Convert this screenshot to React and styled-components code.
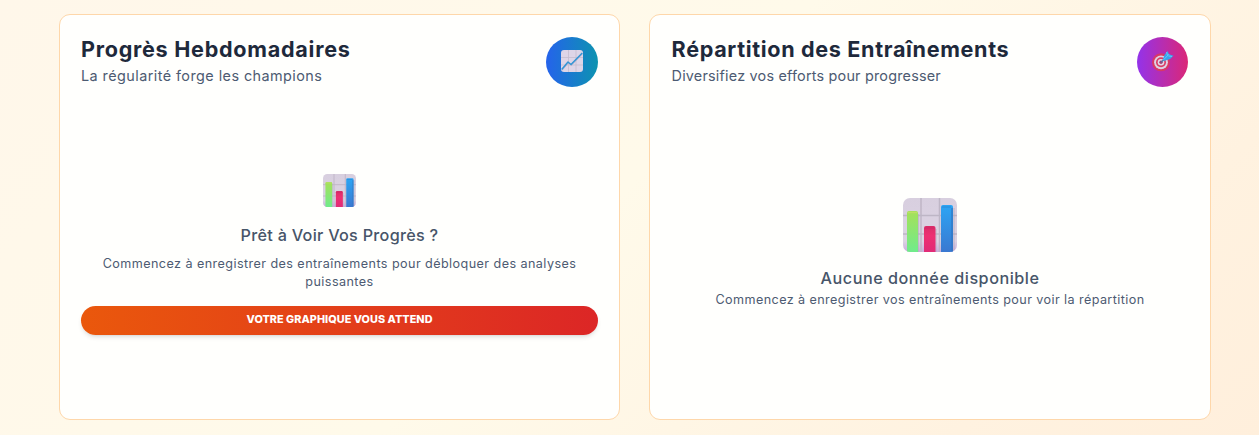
import React from "react";
import styled, { createGlobalStyle } from "styled-components";

const GlobalStyle = createGlobalStyle`
  * { box-sizing: border-box; }
  body { margin: 0; background: #fffaea; }
`;

const Page = styled.main`
  height: 435px;
  padding: 14px 48px 15px 59px;
  display: grid;
  grid-template-columns: 561px 562px;
  column-gap: 29px;
  overflow: hidden;
  background: linear-gradient(135deg, #fff7ea 0%, #fffaea 48%, #fff2e0 82%, #ffefdc 100%);
  font-family: Inter, "Liberation Sans", sans-serif;
  color: #4d5b72;
`;

const Card = styled.section`
  display: flex;
  flex-direction: column;
  height: 406px;
  padding: 22px ${(p) => p.$side || 21}px 21px;
  border: 1px solid #fed7aa;
  border-radius: 11px;
  background: #fffffd;
`;

const CardHeader = styled.header`
  display: flex;
  justify-content: space-between;
  height: 50px;
`;

const Title = styled.h2`
  margin: 0;
  color: #1e293b;
  font-size: 21.6px;
  font-weight: 670;
  line-height: 25px;
  letter-spacing: ${(p) => p.$tracking || 0}px;
  white-space: nowrap;
`;

const Subtitle = styled.p`
  margin: 3px 0 0;
  font-size: 14.4px;
  font-weight: 400;
  line-height: 22px;
  letter-spacing: ${(p) => p.$tracking || 0}px;
  white-space: nowrap;
`;

const IconBadge = styled.div`
  display: flex;
  align-items: center;
  justify-content: center;
  width: ${(p) => p.$width}px;
  height: 50px;
  border-radius: 50%;
  background: linear-gradient(90deg, ${(p) => p.$from}, ${(p) => p.$to});
  svg { display: block; margin-bottom: 2px; }
`;

const EmptyState = styled.div`
  display: flex;
  flex-direction: column;
  align-items: center;
  padding-top: ${(p) => p.$top}px;
  text-align: center;
  svg { display: block; }
`;

const EmptyTitle = styled.h3`
  margin: ${(p) => p.$gap}px 0 0;
  color: #475569;
  font-size: 16.2px;
  font-weight: ${(p) => p.$weight || 500};
  line-height: 24px;
  letter-spacing: ${(p) => p.$tracking || 0}px;
`;

const EmptyText = styled.p`
  margin: ${(p) => p.$gap}px 0 0;
  font-size: 12.6px;
  font-weight: 400;
  line-height: 18px;
  letter-spacing: ${(p) => p.$tracking || 0}px;
`;

const Banner = styled.div`
  width: 100%;
  height: 29px;
  margin-top: 15px;
  border-radius: 15px;
  background: linear-gradient(90deg, #ea580c, #dc2626);
  box-shadow: 0 3px 5px -1px rgba(0, 0, 0, 0.12), 0 2px 3px -2px rgba(0, 0, 0, 0.1);
  color: #fff;
  font-size: 10.8px;
  font-weight: 800;
  line-height: 27px;
  letter-spacing: ${(p) => p.$tracking || 0}px;
`;

function BarsIcon({ size, id }) {
  return (
    <svg width={size} height={size} viewBox="0 0 54 54">
      <defs>
        <linearGradient id={id + "t"} x2="0" y2="1"><stop stopColor="#d8cfdf" /><stop offset=".8" stopColor="#dcd3e3" /><stop offset="1" stopColor="#c9adde" /></linearGradient>
        <linearGradient id={id + "g"} x2="0" y2="1"><stop stopColor="#a6e058" /><stop offset="1" stopColor="#6dec8e" /></linearGradient>
        <linearGradient id={id + "p"} x2="0" y2="1"><stop stopColor="#d92c68" /><stop offset=".35" stopColor="#ed2f72" /><stop offset="1" stopColor="#df2b77" /></linearGradient>
        <linearGradient id={id + "b"} x2="0" y2="1"><stop stopColor="#2ca5f4" /><stop offset="1" stopColor="#3b76cf" /></linearGradient>
        <clipPath id={id + "c"}><rect width="54" height="54" rx="7" /></clipPath>
      </defs>
      <g clipPath={`url(#${id}c)`}>
        <rect width="54" height="54" fill={`url(#${id}t)`} />
        <path d="M18 0V54M36.5 0V54M0 17.5H54M0 36H54" stroke="#bfb6c6" strokeWidth="1.5" />
        <path d="M15.5 16V54M33 31V54M51 10V54" stroke="#b3a9bd" strokeWidth="1.3" opacity=".6" />
        <rect x="4" y="13" width="11" height="43" rx="2" fill={`url(#${id}g)`} />
        <path d="M5 14.5h9" stroke="#bddf66" strokeWidth="1.5" />
        <rect x="21" y="28" width="11.5" height="28" rx="2" fill={`url(#${id}p)`} />
        <path d="M22 30h9" stroke="#cf2a66" strokeWidth="1.2" />
        <rect x="38" y="7" width="12" height="49" rx="2" fill={`url(#${id}b)`} />
        <path d="M39 9h9" stroke="#2a8ad8" strokeWidth="1.2" />
        <path d="M49 10V54" stroke="#3175c0" strokeWidth="1.2" />
      </g>
    </svg>
  );
}

function TrendIcon() {
  return (
    <svg width="22" height="22" viewBox="0 0 22 22">
      <rect width="22" height="22" rx="3" fill="#ded5e7" />
      <path d="M7.5 0V22M15 0V22M0 7.5H22M0 15H22" stroke="#c5bccf" strokeWidth=".8" />
      <path d="M1 20.5L7.5 13l3 2.5L21.5 4" fill="none" stroke="#b9b0ca" strokeWidth=".8" />
      <path d="M.7 19.5L7 12l3 2.5L21.3 3" fill="none" stroke="#3194d4" strokeWidth="1.5" strokeLinejoin="round" />
    </svg>
  );
}

function TargetIcon() {
  return (
    <svg width="22" height="22" viewBox="0 0 22 22">
      <circle cx="9" cy="12.3" r="9" fill="#d93864" />
      <circle cx="9" cy="12.3" r="6.9" fill="#ddd2e4" />
      <circle cx="9" cy="12.3" r="5" fill="#dc3b64" />
      <circle cx="9" cy="12.3" r="3.3" fill="#e3d7e7" />
      <circle cx="9" cy="12.3" r="1.7" fill="#a83f75" />
      <path d="M9 12.3L16 6" stroke="#586d9f" strokeWidth="1.3" />
      <path d="M10.7 9.5L12.5 5l3-4 1.5 3.2L21.5 5.8 18 9l-6 2z" fill="#36a5ec" />
      <path d="M11.5 9.8L17 4.2M14.5 2l1 3.5M20 6.5L16.5 6" stroke="#77c7f4" strokeWidth=".8" />
    </svg>
  );
}

export default function App() {
  return (
    <>
      <GlobalStyle />
      <Page>
        <Card>
          <CardHeader>
            <div>
              <Title $tracking={0.72}>Progrès Hebdomadaires</Title>
              <Subtitle $tracking={0.44}>La régularité forge les champions</Subtitle>
            </div>
            <IconBadge $width={52} $from="#2563eb" $to="#0d93b0"><TrendIcon /></IconBadge>
          </CardHeader>
          <EmptyState $top={87}>
            <BarsIcon size={33} id="weekly" />
            <EmptyTitle $gap={16} $tracking={0.28} $weight={550}>Prêt à Voir Vos Progrès ?</EmptyTitle>
            <EmptyText $gap={8} $tracking={0.43}>
              Commencez à enregistrer des entraînements pour débloquer des analyses puissantes
            </EmptyText>
            <Banner $tracking={0.06}>VOTRE GRAPHIQUE VOUS ATTEND</Banner>
          </EmptyState>
        </Card>
        <Card $side={21.6}>
          <CardHeader>
            <div>
              <Title $tracking={0.65}>Répartition des Entraînements</Title>
              <Subtitle $tracking={0.2}>Diversifiez vos efforts pour progresser</Subtitle>
            </div>
            <IconBadge $width={51} $from="#9333ea" $to="#db2777"><TargetIcon /></IconBadge>
          </CardHeader>
          <EmptyState $top={111}>
            <BarsIcon size={54} id="split" />
            <EmptyTitle $gap={14} $tracking={0.52}>Aucune donnée disponible</EmptyTitle>
            <EmptyText $gap={1} $tracking={0.41}>Commencez à enregistrer vos entraînements pour voir la répartition</EmptyText>
          </EmptyState>
        </Card>
      </Page>
    </>
  );
}
